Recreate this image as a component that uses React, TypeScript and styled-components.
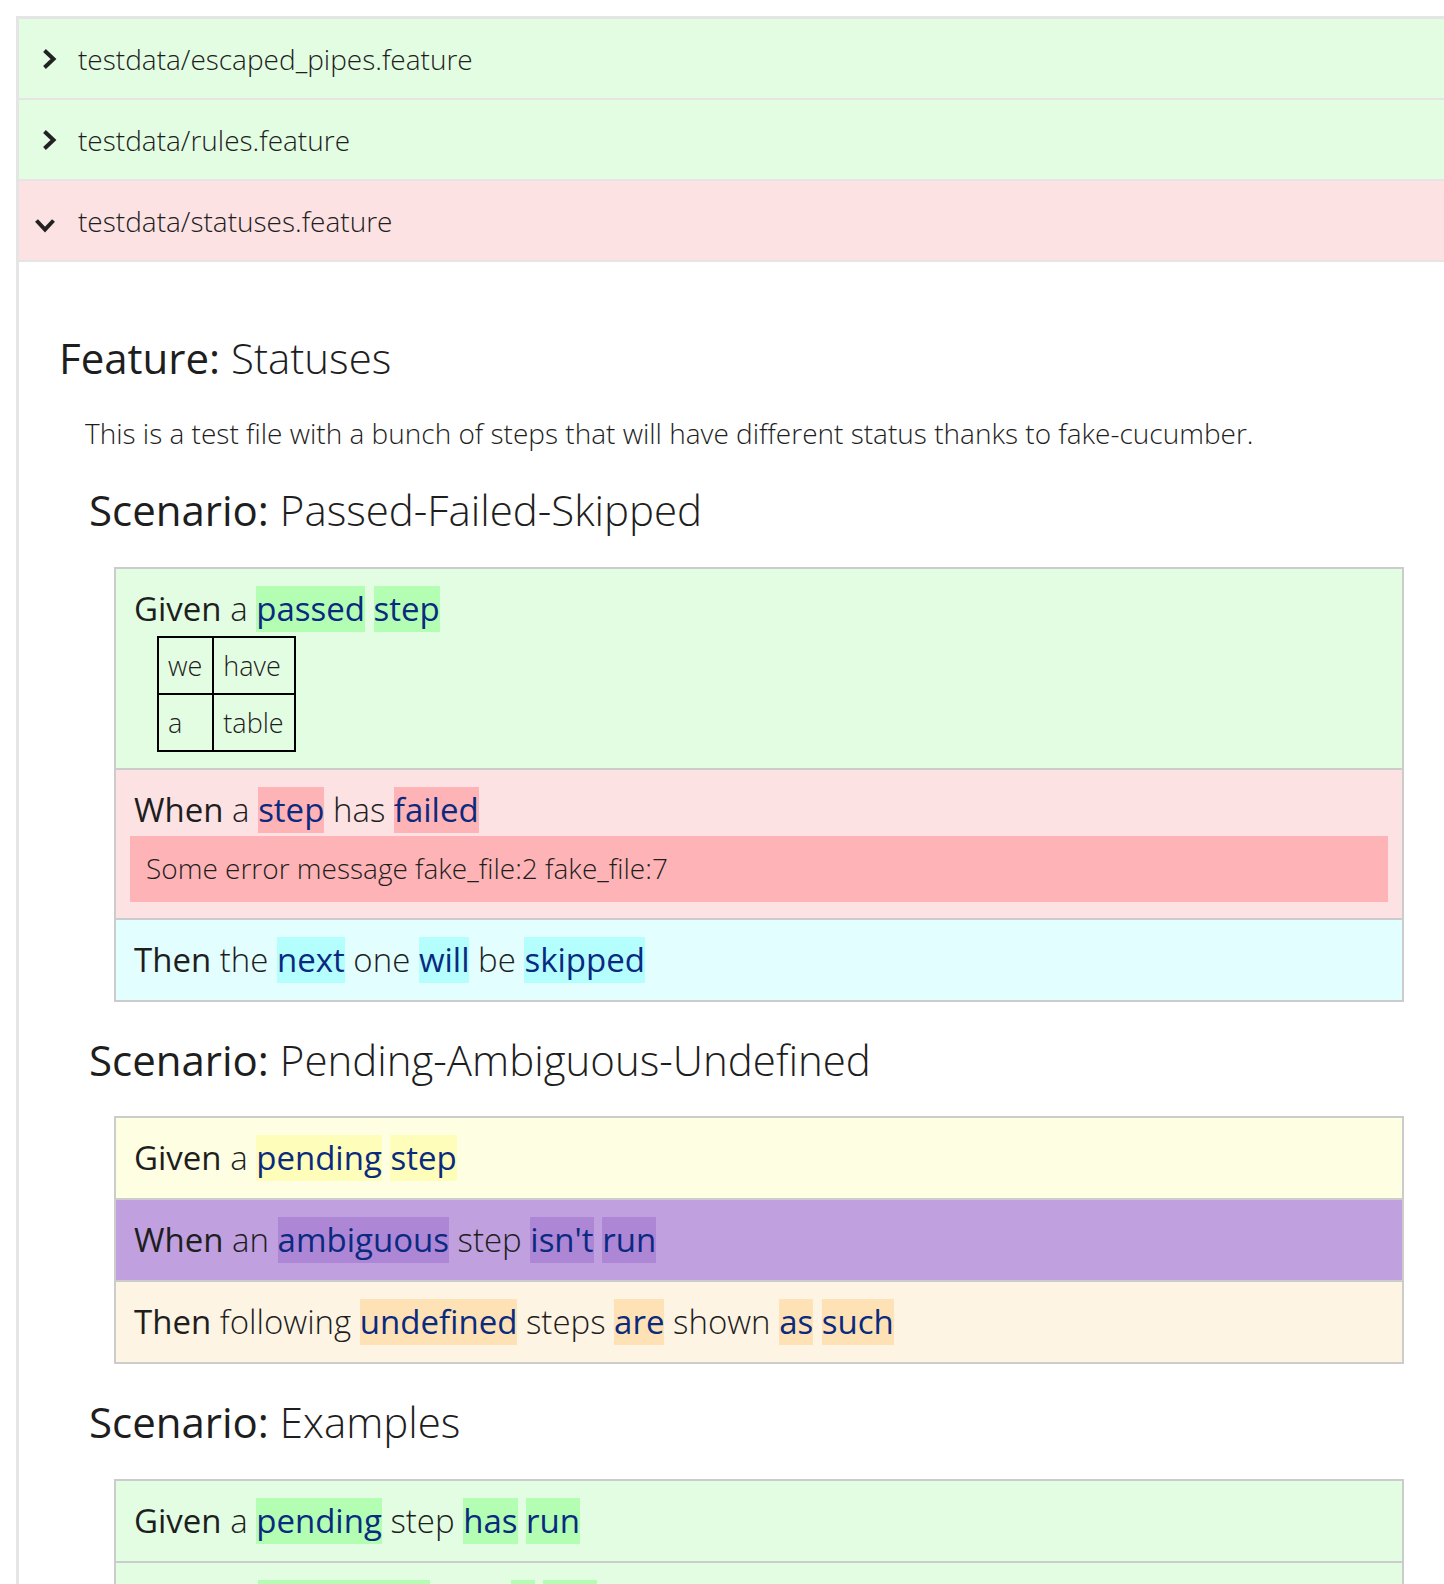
import React from "react";
import styled, { createGlobalStyle } from "styled-components";

const GlobalStyle = createGlobalStyle`
  html, body { margin: 0; padding: 0; background: #ffffff; }
  body {
    font-family: "Open Sans", "Noto Sans", sans-serif;
    color: #222222;
    overflow-x: hidden;
  }
`;

type Status = "passed" | "failed" | "skipped" | "pending" | "ambiguous" | "undefined";

const rowBg: Record<Status, string> = {
  passed: "#e3fde3",
  failed: "#fde2e3",
  skipped: "#e2fefe",
  pending: "#fefee2",
  ambiguous: "#c0a0de",
  undefined: "#fef4e3",
};

const paramBg: Record<Status, string> = {
  passed: "#b4feb4",
  failed: "#feb4b6",
  skipped: "#b4fefe",
  pending: "#fefdb9",
  ambiguous: "#ae86d6",
  undefined: "#fee2b5",
};

const Accordion = styled.div`
  margin: 16px 0 0 16px;
  border-top: 3px solid #e5e5e5;
  border-left: 3px solid #e5e5e5;
  min-height: 1600px;
`;

const ItemHeader = styled.div<{ $status: Status }>`
  display: flex;
  align-items: center;
  height: 79px;
  padding-left: 23px;
  background: ${(p) => rowBg[p.$status]};
  border-bottom: 2px solid #e5e5e5;
  font-size: 28px;
  font-weight: 300;
  color: #1e1e1e;
`;

const IconBox = styled.span`
  width: 36px;
  display: flex;
  justify-content: flex-start;
  align-items: center;
`;

const FeatureBody = styled.div`
  padding: 71px 40px 0 40px;
`;

const FeatureTitle = styled.h1`
  margin: 0;
  font-size: 42px;
  line-height: 1.2;
  font-weight: 300;
  color: #1e1e1e;
`;

const Keyword = styled.span`
  font-weight: 400;
`;

const Description = styled.p`
  margin: 32px 0 0 26px;
  font-size: 28px;
  line-height: 37px;
  font-weight: 300;
  color: #1e1e1e;
`;

const Scenario = styled.section`
  margin-left: 30px;
`;

const ScenarioTitle = styled.h2`
  margin: 33px 0 31px;
  font-size: 42px;
  line-height: 1.2;
  font-weight: 300;
  color: #1e1e1e;
`;

const StepList = styled.ol`
  list-style: none;
  margin: 0 0 0 25px;
  padding: 0;
  border: 2px solid #cccccc;
`;

const StepRow = styled.li<{ $status: Status; $extended: boolean }>`
  background: ${(p) => rowBg[p.$status]};
  padding: 17px 14px ${(p) => (p.$extended ? "16px" : "17px")} 14px;
  & + & {
    border-top: 2px solid #cccccc;
  }
`;

const StepLine = styled.div`
  padding-left: 4px;
  font-size: 33px;
  line-height: 46px;
  font-weight: 300;
  color: #1e1e1e;
  white-space: nowrap;
`;

const Param = styled.span<{ $status: Status }>`
  display: inline-block;
  height: 46px;
  background: ${(p) => paramBg[p.$status]};
  color: #0a2a80;
  font-weight: 400;
`;

const DataTable = styled.table`
  margin: 4px 0 0 27px;
  border-collapse: collapse;
  font-size: 27px;
  line-height: 37px;
  font-weight: 300;
`;

const Cell = styled.td`
  border: 2px solid #000000;
  padding: 9px 10px 9px 9px;
  color: #1e1e1e;
`;

const ErrorBox = styled.div`
  margin-top: 3px;
  background: #feb4b6;
  padding: 14px 16px 15px;
  font-size: 28px;
  line-height: 37px;
  font-weight: 300;
  color: #1e1e1e;
`;

const ChevronRight = () => (
  <svg width="15" height="22" viewBox="0 0 15 22" aria-hidden>
    <polyline points="2.5,2.5 11.5,11 2.5,19.5" fill="none" stroke="#222" strokeWidth="4" strokeLinecap="butt" strokeLinejoin="miter" />
  </svg>
);

const ChevronDown = () => (
  <svg width="22" height="15" viewBox="0 0 22 15" aria-hidden style={{ marginLeft: -8, marginTop: 10 }}>
    <polyline points="2.5,2.5 11,11.5 19.5,2.5" fill="none" stroke="#222" strokeWidth="4" strokeLinecap="butt" strokeLinejoin="miter" />
  </svg>
);

type Part = string | { p: string };

const Step: React.FC<{ status: Status; keyword: string; parts: Part[]; children?: React.ReactNode }> = ({
  status,
  keyword,
  parts,
  children,
}) => (
  <StepRow $status={status} $extended={!!children}>
    <StepLine>
      <Keyword>{keyword}</Keyword>
      {parts.map((part, i) =>
        typeof part === "string" ? (
          <React.Fragment key={i}>{part}</React.Fragment>
        ) : (
          <Param key={i} $status={status}>
            {part.p}
          </Param>
        )
      )}
    </StepLine>
    {children}
  </StepRow>
);

export default function App() {
  return (
    <>
      <GlobalStyle />
      <Accordion>
        <ItemHeader $status="passed">
          <IconBox>
            <ChevronRight />
          </IconBox>
          testdata/escaped_pipes.feature
        </ItemHeader>
        <ItemHeader $status="passed">
          <IconBox>
            <ChevronRight />
          </IconBox>
          testdata/rules.feature
        </ItemHeader>
        <ItemHeader $status="failed">
          <IconBox>
            <ChevronDown />
          </IconBox>
          testdata/statuses.feature
        </ItemHeader>
        <FeatureBody>
          <FeatureTitle>
            <Keyword>Feature:</Keyword> Statuses
          </FeatureTitle>
          <Description>
            This is a test file with a bunch of steps that will have different status thanks to fake-cucumber.
          </Description>

          <Scenario>
            <ScenarioTitle>
              <Keyword>Scenario:</Keyword> Passed-Failed-Skipped
            </ScenarioTitle>
            <StepList>
              <Step status="passed" keyword="Given" parts={[" a ", { p: "passed" }, " ", { p: "step" }]}>
                <DataTable>
                  <tbody>
                    <tr>
                      <Cell>we</Cell>
                      <Cell>have</Cell>
                    </tr>
                    <tr>
                      <Cell>a</Cell>
                      <Cell>table</Cell>
                    </tr>
                  </tbody>
                </DataTable>
              </Step>
              <Step status="failed" keyword="When" parts={[" a ", { p: "step" }, " has ", { p: "failed" }]}>
                <ErrorBox>Some error message fake_file:2 fake_file:7</ErrorBox>
              </Step>
              <Step
                status="skipped"
                keyword="Then"
                parts={[" the ", { p: "next" }, " one ", { p: "will" }, " be ", { p: "skipped" }]}
              />
            </StepList>
          </Scenario>

          <Scenario>
            <ScenarioTitle>
              <Keyword>Scenario:</Keyword> Pending-Ambiguous-Undefined
            </ScenarioTitle>
            <StepList>
              <Step status="pending" keyword="Given" parts={[" a ", { p: "pending" }, " ", { p: "step" }]} />
              <Step
                status="ambiguous"
                keyword="When"
                parts={[" an ", { p: "ambiguous" }, " step ", { p: "isn't" }, " ", { p: "run" }]}
              />
              <Step
                status="undefined"
                keyword="Then"
                parts={[
                  " following ",
                  { p: "undefined" },
                  " steps ",
                  { p: "are" },
                  " shown ",
                  { p: "as" },
                  " ",
                  { p: "such" },
                ]}
              />
            </StepList>
          </Scenario>

          <Scenario>
            <ScenarioTitle>
              <Keyword>Scenario:</Keyword> Examples
            </ScenarioTitle>
            <StepList>
              <Step
                status="passed"
                keyword="Given"
                parts={[" a ", { p: "pending" }, " step ", { p: "has" }, " ", { p: "run" }]}
              />
              <Step
                status="passed"
                keyword="When"
                parts={[" a ", { p: "ambiguous" }, " step ", { p: "is" }, " ", { p: "run" }]}
              />
            </StepList>
          </Scenario>
        </FeatureBody>
      </Accordion>
    </>
  );
}
